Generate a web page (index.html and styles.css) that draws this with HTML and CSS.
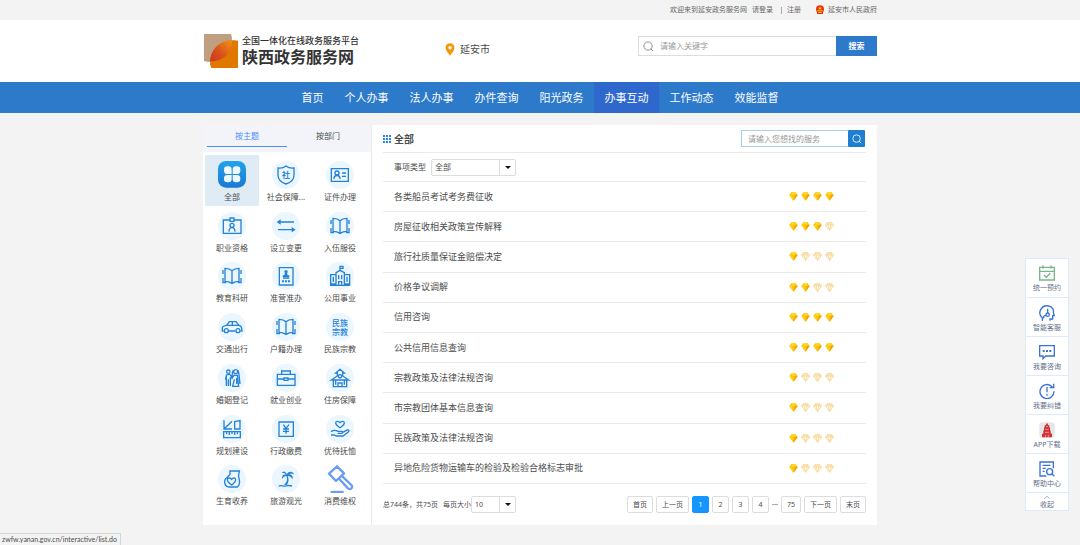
FILE: index.html
```html
<!DOCTYPE html>
<html lang="zh-CN">
<head>
<meta charset="utf-8">
<meta name="viewport" content="width=device-width, initial-scale=1">
<title>办事互动 - 陕西政务服务网</title>
<link rel="stylesheet" href="styles.css">
</head>
<body>
<svg class="sprite" aria-hidden="true">
  <symbol id="gem-full" viewBox="0 0 27 27">
    <path d="M7 1H20L26 9L13.500 26L1 9Z" fill="#fcc20a"/>
    <path d="M7 1H20L18 8H8Z" fill="#ffd92a"/>
    <path d="M1 9H9L13.500 26Z" fill="#ffd014"/>
    <path d="M26 9H18L13.500 26Z" fill="#f0a008"/>
  </symbol>
  <symbol id="gem-empty" viewBox="0 0 27 27">
    <path d="M7 2H20L26 9L13.500 25L1 9ZM1 9H26M9 9L13.500 25L18 9M7 2L9 9L13.500 2L18 9L20 2" fill="#fff8e8" stroke="#f6d491" stroke-width="2.400"/>
  </symbol>
  <symbol id="book" viewBox="0 0 84 84">
    <path d="M42 26C36 20 28 19 21 19V58C29 58 36 60 42 64C48 60 55 58 63 58V19C56 19 48 20 42 26V64"/>
    <path d="M15 24V36M15 48V62H24M69 24V36M69 48V62H60"/>
  </symbol>
  <symbol id="lens" viewBox="0 0 24 24">
    <circle cx="11" cy="11" r="9"/><path d="M17 17L22 22"/>
  </symbol>
</svg>

<div class="topbar">
  <div class="wrap topbar-row">
    <span>欢迎来到延安政务服务网</span>
    <a href="#">请登录</a>
    <span class="topbar-sep"></span>
    <a href="#">注册</a>
    <a class="gov" href="#">
      <svg class="emblem" viewBox="0 0 30 30" aria-hidden="true"><circle cx="15" cy="13" r="12" fill="#e5330f"/><path d="M6 19H24V27H6Z" fill="#e5330f"/><path d="M15 4L17 8H21L18 11L19 14L15 12L11 14L12 11L9 8H13Z" fill="#ffc518"/><path d="M7 16H23V19H7ZM10 21H20V24H10Z" fill="#ffc518"/></svg>
      延安市人民政府
    </a>
  </div>
</div>

<header class="header">
  <div class="wrap header-row">
    <a class="logo" href="#">
      <svg class="logo-mark" viewBox="0 0 102 102" aria-hidden="true">
        <defs><linearGradient id="leaf" x1="0" y1="1" x2="1" y2="0"><stop offset="0" stop-color="#cc3322"/><stop offset="0.450" stop-color="#d9531c"/><stop offset="1" stop-color="#f29412"/></linearGradient></defs>
        <path d="M0 0H81Q85 10 84 20Q80 76 18 84Q8 84 0 81Z" fill="#bf9f80"/>
        <path d="M102 20V102H22Q17 94 18 82C22 44 48 20 84 19Q94 18 102 20Z" fill="#e07800"/>
        <path d="M18 82C20 46 46 21 84 19C84 52 62 84 18 82Z" fill="url(#leaf)"/>
      </svg>
      <span class="logo-text"><small>全国一体化在线政务服务平台</small><strong>陕西政务服务网</strong></span>
    </a>
    <a class="city" href="#">
      <svg class="pin" viewBox="0 0 28 38" aria-hidden="true"><path d="M14 1C6 1 1 7 1 14C1 23 9 29 14 37C19 29 27 23 27 14C27 7 22 1 14 1Z" fill="#f7960a"/><circle cx="14" cy="14" r="5" fill="#fff"/></svg>
      延安市
    </a>
    <form class="site-search">
      <svg class="site-lens" aria-hidden="true"><use href="#lens"/></svg>
      <input type="text" aria-label="站内搜索" placeholder="请输入关键字">
      <button type="button">搜索</button>
    </form>
  </div>
</header>

<nav class="nav">
  <div class="wrap nav-row">
    <a class="short" href="#">首页</a>
    <a href="#">个人办事</a>
    <a href="#">法人办事</a>
    <a href="#">办件查询</a>
    <a href="#">阳光政务</a>
    <a class="current" href="#">办事互动</a>
    <a href="#">工作动态</a>
    <a href="#">效能监督</a>
  </div>
</nav>

<main class="wrap panel">
  <aside class="topics">
    <div class="tabs">
      <button type="button" class="on">按主题</button>
      <button type="button">按部门</button>
    </div>
    <div class="topic-grid">
      <a class="topic selected" href="#">
        <svg class="all" viewBox="0 0 84 84" aria-hidden="true">
          <defs><linearGradient id="blue" x1="0" y1="0" x2="0" y2="1"><stop offset="0" stop-color="#22a3e8"/><stop offset="1" stop-color="#1b78d6"/></linearGradient></defs>
          <rect x="0" y="0" width="84" height="80" rx="24" fill="url(#blue)"/>
          <path d="M41 39V26Q41 16 31 16H28Q18 16 18 26V29Q18 39 28 39ZM44 39V26Q44 16 54 16H57Q67 16 67 26V29Q67 39 57 39ZM41 42V54Q41 64 31 64H28Q18 64 18 54V52Q18 42 28 42ZM44 42V54Q44 64 54 64H57Q67 64 67 54V52Q67 42 57 42Z" fill="#eef8ff"/>
        </svg>全部</a>
      <a class="topic" href="#">
        <svg viewBox="0 0 84 84" aria-hidden="true"><path d="M42 15C36 20 26 22 18 21V42C18 56 30 65 42 69C54 65 66 56 66 42V21C58 22 48 20 42 15Z"/><text x="42" y="50" font-size="24">社</text></svg>社会保障...</a>
      <a class="topic" href="#">
        <svg viewBox="0 0 84 84" aria-hidden="true"><path d="M16 23H67V61H16ZM48 36H60M48 46H60"/><circle cx="33" cy="36" r="6"/><path d="M24 54C24 40 42 40 42 54"/></svg>证件办理</a>

      <a class="topic" href="#">
        <svg viewBox="0 0 84 84" aria-hidden="true"><path d="M36 24H16V64H69V24H48M36 18H48V28H36Z"/><circle cx="42" cy="40" r="6"/><path d="M33 59C33 43 51 43 51 59"/></svg>职业资格</a>
      <a class="topic" href="#">
        <svg viewBox="0 0 84 84" aria-hidden="true"><path d="M18 30H66M18 53H66"/><path class="fill" d="M14 30L26 22V38ZM71 53L59 45V61Z"/></svg>设立变更</a>
      <a class="topic" href="#"><svg aria-hidden="true"><use href="#book"/></svg>入伍服役</a>

      <a class="topic" href="#"><svg aria-hidden="true"><use href="#book"/></svg>教育科研</a>
      <a class="topic" href="#">
        <svg viewBox="0 0 84 84" aria-hidden="true"><path d="M22 17H63V69H22ZM33 48H52"/><circle class="fill" cx="42" cy="29" r="5"/><path class="fill" d="M39 32H45L47 40H52V45H32V40H37ZM30 55H36V61H30ZM39 55H45V61H39ZM48 55H54V61H48Z"/></svg>准营准办</a>
      <a class="topic" href="#">
        <svg viewBox="0 0 84 84" aria-hidden="true"><path d="M30 70V32L42 25L55 32V70M42 25V13H51V19H42M30 38H14V66H30M55 38H71V66H55M12 70H73M38 70V59H47V70M22 44V60M63 44V60M38 39V52M47 39V52"/></svg>公用事业</a>

      <a class="topic" href="#">
        <svg viewBox="0 0 84 84" aria-hidden="true"><path d="M17 54H13V44C13 40 20 38 26 37L34 26H54L63 37C70 38 72 42 72 54H68M32 54H52M26 37H63M43 26V37"/><circle cx="25" cy="53" r="6"/><circle cx="60" cy="53" r="6"/></svg>交通出行</a>
      <a class="topic" href="#"><svg aria-hidden="true"><use href="#book"/></svg>户籍办理</a>
      <a class="topic" href="#"><span class="word-icon">民族宗教</span>民族宗教</a>

      <a class="topic" href="#">
        <svg viewBox="0 0 84 84" aria-hidden="true"><circle cx="31" cy="23" r="5"/><circle cx="53" cy="23" r="6"/><path d="M25 48V34C28 30 35 30 38 34L42 43L48 34H58L62 67H44L49 46M25 48V66M31 46V66M37 40V66M25 36L22 47M56 42V60M46 18C40 30 43 40 42 43M60 19C64 30 64 45 66 60"/></svg>婚姻登记</a>
      <a class="topic" href="#">
        <svg viewBox="0 0 84 84" aria-hidden="true"><path d="M16 31H69V64H16ZM29 31V21H55V31M16 45H36M48 45H69M36 42H48V49H36Z"/></svg>就业创业</a>
      <a class="topic" href="#">
        <svg viewBox="0 0 84 84" aria-hidden="true"><path d="M42 16L55 27H50V36L68 48H62V68H22V48H16L34 36V27H29ZM36 68V57H48V68M29 50V62M55 50V62M22 48H62"/><circle cx="42" cy="37" r="5"/></svg>住房保障</a>

      <a class="topic" href="#">
        <svg viewBox="0 0 84 84" aria-hidden="true"><path d="M18 16V42H42M18 42L42 19M50 20L66 17V42H50ZM17 50H67V68H17ZM26 50V58M34 50V60M42 50V58M50 50V60M58 50V58"/></svg>规划建设</a>
      <a class="topic" href="#">
        <svg viewBox="0 0 84 84" aria-hidden="true"><path d="M21 21H64V64H21ZM34 29L42 40L51 29M42 40V56M33 42H51M33 49H51"/></svg>行政缴费</a>
      <a class="topic" href="#">
        <svg viewBox="0 0 84 84" aria-hidden="true"><path d="M42 38C35 33 29 30 29 24C29 18 38 17 42 23C46 17 55 18 55 24C55 30 49 33 42 38ZM15 50C24 44 30 45 36 49H47C51 49 51 55 47 55H35M50 52L64 45C70 44 70 49 66 52L51 63H31L24 60H15"/></svg>优待抚恤</a>

      <a class="topic" href="#">
        <svg viewBox="0 0 84 84" aria-hidden="true"><path d="M36 18H64C61 28 61 36 64 44C66 54 63 62 58 66H31C23 63 19 56 20 48C21 38 32 36 36 28ZM41 60C33 54 28 50 28 44C28 38 37 37 41 43C45 37 53 38 53 44C53 50 48 54 41 60Z"/></svg>生育收养</a>
      <a class="topic" href="#">
        <svg viewBox="0 0 84 84" aria-hidden="true"><path class="fill" d="M44 28C40 17 33 18 30 24C36 23 40 25 42 29C34 27 29 33 30 42C35 35 40 33 43 33C48 42 44 53 36 60H45C51 50 51 41 47 33C54 33 59 37 61 43C65 34 59 28 51 28C56 25 61 25 66 29C64 19 51 17 44 28Z"/><path d="M20 64C28 58 34 66 42 63S54 61 60 63"/></svg>旅游观光</a>
      <a class="topic" href="#">
        <svg class="gavel" viewBox="0 0 84 84" aria-hidden="true"><path d="M9 26L33 4L54 25L30 48ZM40 42L66 70Q72 75 76 70Q81 65 76 60L49 34"/><path d="M14 81H53"/></svg>消费维权</a>
    </div>
  </aside>

  <section class="content">
    <div class="content-head">
      <svg class="dots" viewBox="0 0 24 24" aria-hidden="true"><path d="M0 0H6V6H0ZM9 0H15V6H9ZM18 0H24V6H18ZM0 9H6V15H0ZM9 9H15V15H9ZM18 9H24V15H18ZM0 18H6V24H0ZM9 18H15V24H9ZM18 18H24V24H18Z" fill="#2a86d8"/></svg>
      <h1>全部</h1>
      <form class="find">
        <input type="text" aria-label="查找服务" placeholder="请输入您想找的服务">
        <button type="button" aria-label="查找"><svg aria-hidden="true"><use href="#lens"/></svg></button>
      </form>
    </div>
    <div class="filter">
      <label for="kind">事项类型</label>
      <span class="drop drop-wide"><select id="kind"><option>全部</option></select><span class="arrow"></span></span>
    </div>
    <ul class="items">
      <li><a href="#">各类船员考试考务费征收</a><span class="rate"><svg><use href="#gem-full"/></svg><svg><use href="#gem-full"/></svg><svg><use href="#gem-full"/></svg><svg><use href="#gem-full"/></svg></span></li>
      <li><a href="#">房屋征收相关政策宣传解释</a><span class="rate"><svg><use href="#gem-full"/></svg><svg><use href="#gem-full"/></svg><svg><use href="#gem-full"/></svg><svg><use href="#gem-empty"/></svg></span></li>
      <li><a href="#">旅行社质量保证金赔偿决定</a><span class="rate"><svg><use href="#gem-full"/></svg><svg><use href="#gem-empty"/></svg><svg><use href="#gem-empty"/></svg><svg><use href="#gem-empty"/></svg></span></li>
      <li><a href="#">价格争议调解</a><span class="rate"><svg><use href="#gem-full"/></svg><svg><use href="#gem-full"/></svg><svg><use href="#gem-empty"/></svg><svg><use href="#gem-empty"/></svg></span></li>
      <li><a href="#">信用咨询</a><span class="rate"><svg><use href="#gem-full"/></svg><svg><use href="#gem-full"/></svg><svg><use href="#gem-full"/></svg><svg><use href="#gem-full"/></svg></span></li>
      <li><a href="#">公共信用信息查询</a><span class="rate"><svg><use href="#gem-full"/></svg><svg><use href="#gem-full"/></svg><svg><use href="#gem-full"/></svg><svg><use href="#gem-full"/></svg></span></li>
      <li><a href="#">宗教政策及法律法规咨询</a><span class="rate"><svg><use href="#gem-full"/></svg><svg><use href="#gem-empty"/></svg><svg><use href="#gem-empty"/></svg><svg><use href="#gem-empty"/></svg></span></li>
      <li><a href="#">市宗教团体基本信息查询</a><span class="rate"><svg><use href="#gem-full"/></svg><svg><use href="#gem-empty"/></svg><svg><use href="#gem-empty"/></svg><svg><use href="#gem-empty"/></svg></span></li>
      <li><a href="#">民族政策及法律法规咨询</a><span class="rate"><svg><use href="#gem-full"/></svg><svg><use href="#gem-empty"/></svg><svg><use href="#gem-empty"/></svg><svg><use href="#gem-empty"/></svg></span></li>
      <li><a href="#">异地危险货物运输车的检验及检验合格标志审批</a><span class="rate"><svg><use href="#gem-full"/></svg><svg><use href="#gem-empty"/></svg><svg><use href="#gem-empty"/></svg><svg><use href="#gem-empty"/></svg></span></li>
    </ul>
    <div class="foot">
      <span class="total">总744条，共75页</span>
      <label for="size">每页大小</label>
      <span class="drop"><select id="size"><option>10</option></select><span class="arrow"></span></span>
      <div class="pages">
        <button type="button">首页</button>
        <button type="button">上一页</button>
        <button type="button" class="on">1</button>
        <button type="button">2</button>
        <button type="button">3</button>
        <button type="button">4</button>
        <span class="more">···</span>
        <button type="button">75</button>
        <button type="button">下一页</button>
        <button type="button">末页</button>
      </div>
    </div>
  </section>
</main>

<div class="tools">
  <a href="#"><svg class="green" viewBox="0 0 48 48" aria-hidden="true"><path d="M2 7H46V45H2ZM2 19H46M12 1V11M36 1V11M15 30L22 37L34 25"/></svg>统一预约</a>
  <a href="#"><svg viewBox="0 0 48 48" aria-hidden="true"><path d="M10 47V38C2 32 1 22 5 14C10 4 20 1 29 3C40 5 45 14 43 23L46 32H41V42H33V47M15 40C12 34 16 31 21 31M26 11V25"/><circle cx="26" cy="29" r="5"/></svg>智能客服</a>
  <a href="#"><svg viewBox="0 0 48 48" aria-hidden="true"><path d="M2 5H46V36H20L12 44V36H2Z"/><path class="fill" d="M11 18H17V24H11ZM21 18H27V24H21ZM31 18H37V24H31Z"/></svg>我要咨询</a>
  <a href="#"><svg viewBox="0 0 48 48" aria-hidden="true"><path d="M40 12A21 21 0 1 0 45 25M44 2V14H32M24 12V28M24 33V38"/></svg>我要纠错</a>
  <a href="#"><svg viewBox="0 0 48 48" aria-hidden="true"><rect class="tile" x="1" y="1" width="46" height="46" rx="8"/><path class="tower" d="M24 2L28 10H31V15L33 17V24L35 26V34L39 36V46H9V36L13 34V26L15 24V17L17 15V10H20Z"/><path class="mark" d="M21 14H27M19 22H29M18 31H30M20 38V45M28 38V45"/></svg>APP下载</a>
  <a href="#"><svg viewBox="0 0 48 48" aria-hidden="true"><path d="M22 45H3V3H43V22M11 13H34M11 22H20M11 31H17M39 39L46 46"/><circle cx="32" cy="32" r="9"/></svg>帮助中心</a>
  <button type="button"><svg viewBox="0 0 18 9" aria-hidden="true"><path d="M1 8L9 1L17 8"/></svg>收起</button>
</div>

<div class="status">zwfw.yanan.gov.cn/interactive/list.do</div>
</body>
</html>
```
FILE: styles.css
```css
* { box-sizing: border-box; }

body {
  margin: 0;
  background: #f3f3f3;
  color: #4c4c4c;
  font: 8px/12px "Noto Sans", "Noto Sans CJK SC", sans-serif;
}

a { color: inherit; text-decoration: none; }

button, input, select {
  margin: 0;
  padding: 0;
  border: 0;
  background: none;
  color: inherit;
  font: inherit;
}

svg { display: block; flex: none; }
.sprite { position: absolute; width: 0; height: 0; }
.wrap { max-width: 674px; margin: 0 auto; }

/* top bar */
.topbar { font-size: 7px; color: #666; }
.topbar-row {
  display: flex;
  align-items: center;
  justify-content: flex-end;
  gap: 5px;
  height: 20px;
}
.topbar-sep { width: 1px; height: 7px; margin-left: 3px; background: #aaa; }
.gov { display: flex; align-items: center; gap: 3px; margin-left: 9px; }
.emblem { width: 10px; height: 10px; }

/* header */
.header { background: #fff; }
.header-row {
  display: grid;
  grid-template-columns: 242px 1fr 239px;
  align-items: start;
  height: 62px;
  padding-top: 14px;
}
.logo { display: flex; gap: 4px; padding-left: 1px; color: #333; }
.logo-mark { width: 34px; height: 34px; }
.logo-text { display: flex; flex-direction: column; white-space: nowrap; }
.logo-text small { font-size: 9px; line-height: 14px; font-weight: 500; }
.logo-text strong { font-size: 16px; line-height: 18px; }
.city { display: flex; align-items: center; gap: 5px; height: 30px; font-size: 10px; }
.pin { width: 10px; height: 13px; }
.site-search {
  display: flex;
  align-items: center;
  height: 20px;
  margin-top: 2px;
  border: 1px solid #ddd;
  border-right: 0;
}
.site-lens { width: 11px; height: 11px; margin: 0 6px 0 4px; fill: none; stroke: #888; stroke-width: 2; }
.site-search input { flex: 1; min-width: 0; }
.site-search button { align-self: stretch; width: 41px; margin: -1px 0; background: #2d7acb; color: #fff; font-weight: bold; }
input { outline: 0; }
input::placeholder { color: #999; opacity: 1; }

/* navigation */
.nav { background: #2d7acb; color: #fff; font-size: 11px; }
.nav-row { display: flex; padding-left: 88px; }
.nav a { width: 65px; text-align: center; line-height: 31px; }
.nav .short { width: 43px; }
.nav .current { background: #2e68cd; }

/* main panel */
.panel {
  display: grid;
  grid-template-columns: 169px 1fr;
  min-height: 400px;
  margin-top: 12px;
  background: #fff;
}

.topics { display: flex; flex-direction: column; border-right: 1px solid #ebebeb; }
.tabs { display: flex; gap: 1px; height: 27px; padding: 0 3px 5px 4px; background: #f2f4f9; }
.tabs button { flex: 1; }
.tabs .on { color: #4b8df5; border-bottom: 1px solid #4b8df5; }

.topic-grid {
  flex: 1;
  display: grid;
  grid-template-columns: repeat(3, 54px);
  grid-auto-rows: 1fr;
  padding: 3px 0 15px 2px;
}
.topic {
  display: flex;
  flex-direction: column;
  align-items: center;
  gap: 2px;
  padding-top: 6px;
  white-space: nowrap;
}
.topic.selected { background: #e0ecf5; }
.topic svg, .word-icon {
  width: 28px;
  height: 28px;
  border-radius: 50%;
  background: #ecf6ff;
}
.topic svg { fill: none; stroke: #2583d6; stroke-width: 4; }
.topic text { fill: #2583d6; stroke: none; font-weight: bold; text-anchor: middle; }
.topic .fill { fill: #2583d6; stroke: none; }
.topic .all { background: none; border-radius: 0; stroke: none; }
.topic .gavel { background: none; border-radius: 0; stroke: #6c9df2; stroke-width: 7; stroke-linejoin: round; }
.word-icon { padding: 5px 6px; color: #2583d6; font-weight: 500; line-height: 9px; white-space: normal; }

.content { display: flex; flex-direction: column; min-width: 0; padding: 0 11px; }
.content-head { display: flex; align-items: center; height: 28px; border-bottom: 1px solid #ebebeb; }
.dots { width: 8px; height: 8px; margin-right: 3px; }
h1 { margin: 0; font-size: 10px; }
.find { display: flex; width: 124px; height: 17px; margin: 0 1px 0 auto; }
.find input { flex: 1; min-width: 0; padding: 0 6px; border: 1px solid #a9cdf0; border-right: 0; }
.find button { display: grid; place-items: center; width: 17px; border-radius: 1px; background: #1e7fd2; }
.find svg { width: 10px; height: 10px; fill: none; stroke: #fff; stroke-width: 2; }

.filter { display: flex; align-items: center; gap: 5px; height: 29px; padding-left: 11px; border-bottom: 1px solid #ebebeb; }
.drop { display: grid; grid-template-columns: 1fr 16px; width: 45px; height: 17px; border: 1px solid #ddd; border-radius: 2px; background: #fff; }
.drop-wide { width: 85px; }
.drop select { grid-area: 1 / 1 / 2 / 3; appearance: none; padding: 0 3px; }
.arrow { grid-area: 1 / 2; display: grid; place-items: center; border-left: 1px solid #ddd; pointer-events: none; }
.arrow::after { content: ""; border: 3px solid transparent; border-top-color: #111; border-bottom: 0; }

.items { flex: 1; display: grid; grid-auto-rows: 1fr; margin: 0; padding: 0; list-style: none; }
.items li { display: flex; align-items: center; justify-content: space-between; padding: 0 32px 0 11px; border-bottom: 1px solid #ebebeb; font-size: 9px; }
.rate { display: flex; gap: 3px; }
.rate svg { width: 9px; height: 9px; }

.foot { display: flex; align-items: center; height: 41px; font-size: 7px; }
.total { margin-right: 5px; }
.pages { display: flex; align-items: center; gap: 3px; margin-left: auto; }
.pages button { min-width: 17px; height: 17px; padding: 0 5px; border: 1px solid #ddd; border-radius: 2px; }
.pages .on { border-color: #1596ff; background: #1596ff; color: #fff; }
.more { font-weight: bold; }

/* floating tools */
.tools { position: fixed; top: 258px; right: 11px; width: 44px; border: 1px solid #dcebfb; background: #fff; color: #5f6f88; font-size: 7px; }
.tools a { display: flex; flex-direction: column; align-items: center; gap: 1px; height: 39px; padding-top: 6px; border-bottom: 1px solid #dcebfb; }
.tools a + a { padding-top: 7px; }
.tools svg { width: 16px; height: 16px; fill: none; stroke: #3a72d8; stroke-width: 4; }
.tools .green { stroke: #79b58c; }
.tools .fill { fill: #3a72d8; stroke: none; }
.tools .tile { fill: #e6e6e6; stroke: none; }
.tools .tower { fill: #cf3337; stroke: none; }
.tools .mark { stroke: #f2b8b8; stroke-width: 2; }
.tools button { display: flex; flex-direction: column; align-items: center; width: 100%; padding-top: 3px; line-height: 11px; }
.tools button svg { width: 6px; height: 3px; stroke: #7d889b; stroke-width: 2; }

/* link preview */
.status { position: fixed; left: 0; bottom: 0; padding: 0 3px 0 2px; border: 1px solid #d5d5d5; border-width: 1px 1px 0 0; background: #f3f3f3; font: 7px/11px Lato, sans-serif; }
```
